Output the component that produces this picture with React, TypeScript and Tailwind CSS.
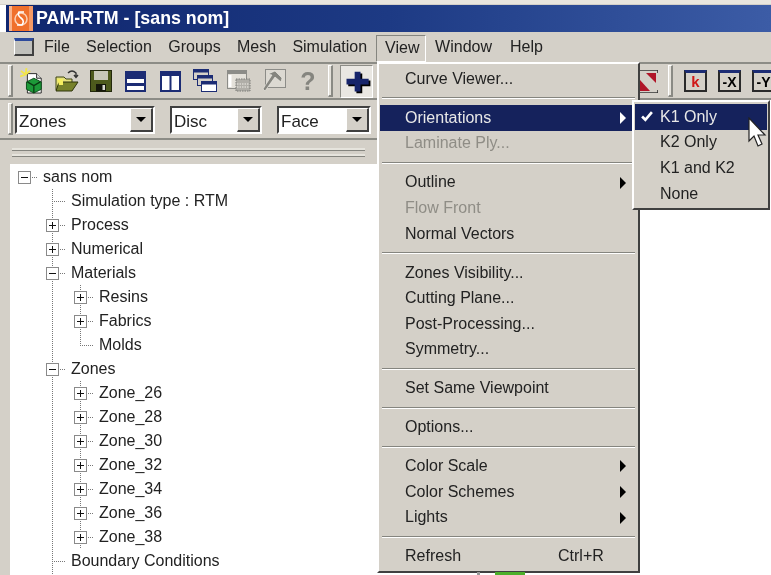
const FONT = "font-['Liberation_Sans',Arial,sans-serif]"

const Grip = ({ cls = "" }: any) => (
    <div className={`shrink-0 w-[5px] bg-[#e4e1da] border-l border-t border-white border-r-2 border-b-2 border-r-[#8a8a84] border-b-[#8a8a84] ${cls}`} />
)

const Logo = () => (
    <svg width="24" height="25" viewBox="0 0 24 25" className="shrink-0">
        <rect width="24" height="25" fill="#f0702c" />
        <rect x="0" width="3" height="25" fill="#f9b48c" />
        <rect x="20" width="4" height="25" fill="#f59a66" />
        <circle cx="12" cy="13" r="6" fill="none" stroke="#fbd0b5" strokeWidth="1.5" />
        <path d="M15 6 L10 6 Q8 9 12 12 Q16 15 13 19 L8 19" fill="none" stroke="#ffffff" strokeWidth="1.6" />
    </svg>
)

const IconNew = () => (
    <svg width="26" height="28" viewBox="0 0 26 28">
        <path d="M8 6 H18 L23 11 V27 H8 Z" fill="#fff" stroke="#222" />
        <path d="M18 6 V11 H23" fill="#ddd" stroke="#222" />
        <path d="M1 3 L6 7 M7 0 L6 7 M0 9 L6 7 M11 3 L6 7" stroke="#f2e54a" strokeWidth="2" />
        <path d="M15 11 L23 15 V23 L15 27 L7 23 V15 Z" fill="#1c9a38" stroke="#0a4a18" />
        <path d="M15 19 V27 M15 19 L8 15 M15 19 L22 15" stroke="#0a3a12" strokeWidth="1.4" />
    </svg>
)
const IconOpen = () => (
    <svg width="24" height="24" viewBox="0 0 24 24">
        <path d="M1 8 H9 L11 10 H17 V21 H1 Z" fill="#e4e07a" stroke="#3c4414" />
        <path d="M4 13 H23 L17 22 H1 Z" fill="#77812a" stroke="#2e340c" />
        <path d="M2 10 H8 V16 H4 Z" fill="#f5ee60" />
        <path d="M13 4 Q17 0 21 4 L21 8 M19 6 L21 8.5 L23 6" fill="none" stroke="#333" strokeWidth="1.4" />
    </svg>
)
const IconSave = () => (
    <svg width="22" height="22" viewBox="0 0 22 22">
        <rect x="0.5" y="0.5" width="21" height="21" fill="#4d5a1c" stroke="#22280c" />
        <rect x="4" y="1" width="14" height="9" fill="#c8c8b8" />
        <rect x="6" y="14" width="10" height="7.5" fill="#14160a" />
        <rect x="12.5" y="15" width="2.5" height="5" fill="#d8d8d0" />
    </svg>
)
const IconRows = () => (
    <svg width="21" height="21" viewBox="0 0 21 21">
        <rect width="21" height="21" fill="#1c2c74" />
        <rect x="2" y="8" width="17" height="4" fill="#fff" />
        <rect x="2" y="15" width="17" height="4" fill="#fff" />
    </svg>
)
const IconCols = () => (
    <svg width="21" height="21" viewBox="0 0 21 21">
        <rect width="21" height="21" fill="#1c2c74" />
        <rect x="2" y="5" width="7.5" height="14" fill="#fff" />
        <rect x="11.5" y="5" width="7.5" height="14" fill="#fff" />
    </svg>
)
const IconCascade = () => (
    <svg width="24" height="24" viewBox="0 0 24 24">
        <rect x="0.5" y="0.5" width="15" height="10" fill="#d4d0c8" stroke="#1c2c74" />
        <rect x="0.5" y="0.5" width="15" height="3" fill="#1c2c74" />
        <rect x="4.5" y="6.5" width="15" height="10" fill="#d4d0c8" stroke="#1c2c74" />
        <rect x="4.5" y="6.5" width="15" height="3" fill="#1c2c74" />
        <rect x="8.5" y="12.5" width="15" height="10" fill="#fff" stroke="#1c2c74" />
        <rect x="8.5" y="12.5" width="15" height="3" fill="#1c2c74" />
    </svg>
)
const IconGrayWin = () => (
    <svg width="24" height="22" viewBox="0 0 24 22">
        <rect x="0.5" y="0.5" width="19" height="18" fill="#e4e1da" stroke="#8c8c88" />
        <rect x="1" y="1" width="18" height="3" fill="#8c8c88" />
        <rect x="1.5" y="5" width="3" height="12" fill="#fff" />
        <rect x="9" y="9" width="14" height="12" fill="#b0aea8" stroke="#7a7a76" strokeDasharray="1.5 1" />
        <path d="M10 14 H22 M10 17 H22" stroke="#f0eee8" strokeDasharray="1.5 1" />
    </svg>
)
const IconGrayHammer = () => (
    <svg width="24" height="24" viewBox="0 0 24 24">
        <rect x="3.5" y="0.5" width="20" height="18" fill="#dcd9d2" stroke="#8c8c88" />
        <path d="M6 5 L13 2 L20 9 L19 13 L13 8 L3 22 L1 20 L10 6 Z" fill="#85857f" stroke="#f2f0ea" strokeWidth="0.6" />
    </svg>
)
const IconRed = () => (
    <svg width="20" height="23" viewBox="0 0 20 23">
        <rect width="20" height="23" fill="#d4d0c8" />
        <path d="M0 0 H20 M0 0 V23 M20 0 V3 M20 20 V23 M0 23 H20" stroke="#333" strokeWidth="1.6" />
        <path d="M2 10 L2 21 L12 21 Z" fill="#b01528" />
        <path d="M8 3 L18 3 L18 13 Z" fill="#b01528" />
    </svg>
)
const IconAxisWin = ({ children }: any) => (
    <div className="w-[23px] h-[22px] shrink-0 border-2 border-t-[3px] border-[#2a2a2a] border-t-[#1c2c74] bg-[#d4d0c8] flex items-center justify-center overflow-hidden text-[14px] font-bold leading-none text-black">
        {children}
    </div>
)

const Toolbar = () => (
    <div className="h-[38px] shrink-0 flex items-center border-t-2 border-[#8c8c86] border-b-2 border-b-[#8c8c86] overflow-hidden">
        <Grip cls="h-[32px] ml-[8px]" />
        <div className="flex items-center shrink-0 gap-[10.5px] ml-[7px] w-[302px]">
            <div className="w-[24px] shrink-0 flex justify-center"><IconNew /></div>
            <div className="w-[24px] shrink-0 flex justify-center"><IconOpen /></div>
            <div className="w-[24px] shrink-0 flex justify-center"><IconSave /></div>
            <div className="w-[24px] shrink-0 flex justify-center"><IconRows /></div>
            <div className="w-[24px] shrink-0 flex justify-center"><IconCols /></div>
            <div className="w-[24px] shrink-0 flex justify-center"><IconCascade /></div>
            <div className="w-[24px] shrink-0 flex justify-center"><IconGrayWin /></div>
            <div className="w-[24px] shrink-0 flex justify-center"><IconGrayHammer /></div>
            <div className="w-[24px] shrink-0 text-center text-[25px] font-bold leading-none text-[#85857f]">?</div>
        </div>
        <Grip cls="h-[32px] ml-[6px]" />
        <div className="ml-[7px] w-[33px] h-[33px] shrink-0 flex items-center justify-center border border-t-[#8c8c86] border-l-[#8c8c86] border-b-white border-r-white bg-[#e9e7e2]">
            <svg width="28" height="28" viewBox="0 0 24 24">
                <path d="M10 4 H15 V10 H22 V15 H15 V21 H10 V15 H3 V10 H10 Z" fill="#000" transform="translate(1.5 1.5)" />
                <path d="M10 4 H15 V10 H22 V15 H15 V21 H10 V15 H3 V10 H10 Z" fill="#16246a" />
            </svg>
        </div>
        <div className="ml-[265px] shrink-0"><IconRed /></div>
        <Grip cls="h-[32px] ml-[10px]" />
        <div className="ml-[11px] flex items-center gap-[11px] shrink-0">
            <IconAxisWin><span className="text-[#d01818] text-[15px]">k</span></IconAxisWin>
            <IconAxisWin>-X</IconAxisWin>
            <IconAxisWin>-Y</IconAxisWin>
        </div>
    </div>
)

const Combo = ({ label, width }: any) => (
    <div className={`${width} h-[28px] shrink-0 flex border-2 border-[#404040] border-b-white border-r-white bg-white`}>
        <div className="flex-1 pl-[2px] text-[17px] leading-[27px] text-[#222]">{label}</div>
        <div className="w-[23px] flex items-center justify-center bg-[#d4d0c8] border border-white border-b-2 border-r-2 border-b-[#404040] border-r-[#404040]">
            <div className="w-0 h-0 border-l-[5px] border-r-[5px] border-t-[5px] border-l-transparent border-r-transparent border-t-black" />
        </div>
    </div>
)

// one cell of tree drawing
const TreeCell = ({ kind }: any) => {
    const hasBox = kind == "plus" || kind == "minus" || kind == "rootMinus"
    return (
        <svg width="28" height="24" viewBox="0 0 28 24" className="shrink-0">
            {kind != "rootMinus" && kind != "space" && (
                <line x1="14.5" y1="0" x2="14.5" y2={kind == "last" ? 12 : 24} stroke="#777" strokeDasharray="1 1" />
            )}
            {kind != "guide" && kind != "space" && (
                <line x1="14" y1="12.5" x2="28" y2="12.5" stroke="#777" strokeDasharray="1 1" />
            )}
            {hasBox && (
                <g>
                    <rect x="8.5" y="6.5" width="12" height="12" fill="#fff" stroke="#8a8a8a" />
                    <line x1="11" y1="12.5" x2="18" y2="12.5" stroke="#111" />
                    {kind == "plus" && <line x1="14.5" y1="9" x2="14.5" y2="16" stroke="#111" />}
                </g>
            )}
        </svg>
    )
}

const TREE: any[] = [
    { cells: ["rootMinus"], text: "sans nom" },
    { cells: ["space", "line"], text: "Simulation type : RTM" },
    { cells: ["space", "plus"], text: "Process" },
    { cells: ["space", "plus"], text: "Numerical" },
    { cells: ["space", "minus"], text: "Materials" },
    { cells: ["space", "guide", "plus"], text: "Resins" },
    { cells: ["space", "guide", "plus"], text: "Fabrics" },
    { cells: ["space", "guide", "last"], text: "Molds" },
    { cells: ["space", "minus"], text: "Zones" },
    ...["26", "28", "30", "32", "34", "36", "38"].map((n) => ({ cells: ["space", "guide", "plus"], text: `Zone_${n}` })),
    { cells: ["space", "line"], text: "Boundary Conditions" },
    { cells: ["space", "line"], text: "" },
]

const Separator = () => (
    <div className="h-[13.4px] flex flex-col justify-center px-[3px]">
        <div className="h-[1px] bg-[#85857f]" />
        <div className="h-[1px] bg-white" />
    </div>
)

const Arrow = ({ color = "border-l-black" }: any) => (
    <div className={`absolute right-[7px] top-[7px] w-0 h-0 border-t-[6px] border-b-[6px] border-l-[6px] border-t-transparent border-b-transparent ${color}`} />
)

const MenuItem = ({ label, shortcut, arrow, active, disabled }: any) => (
    <div className={`relative h-[25.6px] ml-[1px] mr-[5px] pl-[25px] flex items-center text-[16px]
        ${active ? "bg-[#15225c] text-[#e8e8e8]" : disabled ? "text-[#8f8d86]" : "text-[#222]"}`}>
        <span className="flex-1 whitespace-nowrap">{label}</span>
        {shortcut && <span className="absolute left-[178px]">{shortcut}</span>}
        {arrow && <Arrow color={active ? "border-l-white" : "border-l-black"} />}
    </div>
)

const ViewMenu = () => (
    <div className="absolute left-[377px] top-[62px] w-[263px] h-[511px] pt-[2px] bg-[#d4d0c8] border-t-2 border-l-2 border-white border-r-2 border-b-2 border-r-[#404040] border-b-[#404040]">
        <MenuItem label="Curve Viewer..." />
        <Separator />
        <MenuItem label="Orientations" arrow active />
        <MenuItem label="Laminate Ply..." disabled />
        <Separator />
        <MenuItem label="Outline" arrow />
        <MenuItem label="Flow Front" disabled />
        <MenuItem label="Normal Vectors" />
        <Separator />
        <MenuItem label="Zones Visibility..." />
        <MenuItem label="Cutting Plane..." />
        <MenuItem label="Post-Processing..." />
        <MenuItem label="Symmetry..." />
        <Separator />
        <MenuItem label="Set Same Viewpoint" />
        <Separator />
        <MenuItem label="Options..." />
        <Separator />
        <MenuItem label="Color Scale" arrow />
        <MenuItem label="Color Schemes" arrow />
        <MenuItem label="Lights" arrow />
        <Separator />
        <MenuItem label="Refresh" shortcut="Ctrl+R" />
    </div>
)

const OrientationMenu = () => (
    <div className="absolute left-[632px] top-[100px] w-[138px] h-[110px] pt-[2px] bg-[#d4d0c8] border-t-2 border-l-2 border-white border-r-2 border-b-2 border-r-[#404040] border-b-[#404040] text-[16px] text-[#222]">
        <div className="relative h-[25.6px] mx-[1px] pl-[25px] flex items-center bg-[#15225c] text-[#e8e8e8]">
            <svg width="12" height="11" viewBox="0 0 11 10" className="absolute left-[6px] top-[7px]">
                <path d="M1 5 L4 8 L10 1" fill="none" stroke="#fff" strokeWidth="2.4" />
            </svg>
            K1 Only
        </div>
        <div className="h-[25.6px] mx-[1px] pl-[25px] flex items-center">K2 Only</div>
        <div className="h-[25.6px] mx-[1px] pl-[25px] flex items-center">K1 and K2</div>
        <div className="h-[25.6px] mx-[1px] pl-[25px] flex items-center">None</div>
    </div>
)

export default function App() {
    return (
        <div className={`relative w-[771px] h-[575px] overflow-hidden flex flex-col bg-white blur-[0.35px] ${FONT}`}>
            <div className="h-[5px] shrink-0 bg-[#e8e5de] border-b border-[#d4d0c8]" />
            {/* title bar */}
            <div className="h-[27px] shrink-0 ml-[6px] pl-[3px] flex items-center gap-[3px] bg-gradient-to-r from-[#10266e] via-[#1d3a84] to-[#3c5ca6]">
                <Logo />
                <div className="text-[17.8px] font-bold text-white whitespace-nowrap">PAM-RTM - [sans nom]</div>
            </div>
            {/* menu bar */}
            <div className="h-[30px] shrink-0 bg-[#d4d0c8] flex items-center text-[16px] text-[#222] pl-[14px]">
                <div className="w-[20px] h-[18px] shrink-0 border border-white border-r-2 border-b-2 border-r-[#404040] border-b-[#404040] bg-[#c0c0bc] border-t-[3px] border-t-[#2c4a9c]" />
                <div className="ml-[10px] flex gap-[16.3px] whitespace-nowrap">
                    <span>File</span>
                    <span>Selection</span>
                    <span>Groups</span>
                    <span>Mesh</span>
                    <span>Simulation</span>
                </div>
                <div className="ml-[9px] w-[50px] h-[27px] mt-[2px] pl-[8px] flex items-center border border-[#85857f] border-b-white border-r-white">View</div>
                <div className="ml-[9px] flex gap-[18px] whitespace-nowrap">
                    <span>Window</span>
                    <span>Help</span>
                </div>
            </div>
            <div className="bg-[#d4d0c8] shrink-0"><Toolbar /></div>
            {/* left panel */}
            <div className="flex-1 min-h-0 w-[377px] flex flex-col bg-[#d4d0c8] overflow-hidden">
                <div className="h-[40px] shrink-0 flex items-center border-b-2 border-[#8c8c86]">
                    <Grip cls="h-[32px] ml-[8px]" />
                    <div className="ml-[2px] flex items-center gap-[15px] mt-[2px]">
                        <Combo label="Zones" width="w-[140px]" />
                        <Combo label="Disc" width="w-[92px]" />
                        <Combo label="Face" width="w-[94px]" />
                    </div>
                </div>
                <div className="h-[24px] shrink-0 px-[12px] flex flex-col justify-center gap-[3px]">
                    <div className="h-[3px] bg-[#e6e4dd] border-b border-[#85857f]" />
                    <div className="h-[3px] bg-[#e6e4dd] border-b border-[#85857f]" />
                </div>
                <div className="flex-1 min-h-0 ml-[10px] bg-white overflow-hidden pt-[1px] text-[16px] text-[#222]">
                    {TREE.map((row: any, i: number) => (
                        <div key={i} className="h-[24px] flex items-center whitespace-nowrap">
                            {row.cells.map((c: any, j: number) => <TreeCell key={j} kind={c} />)}
                            <span className="ml-[5px]">{row.text}</span>
                        </div>
                    ))}
                </div>
            </div>
            <ViewMenu />
            <OrientationMenu />
            {/* what shows of the viewport under the menu */}
            <div className="absolute left-[495px] top-[572px] w-[30px] h-[3px] bg-[#4caf2a]" />
            <div className="absolute left-[477px] top-[572px] w-[3px] h-[3px] bg-[#999]" />
            {/* mouse pointer */}
            <svg width="22" height="32" viewBox="0 0 22 32" className="absolute left-[747px] top-[117px]">
                <path d="M2 1 V24 L7 19 L11 29 L15 27 L11 18 L18 18 Z" fill="#fff" stroke="#222" strokeWidth="1.2" />
            </svg>
        </div>
    )
}
